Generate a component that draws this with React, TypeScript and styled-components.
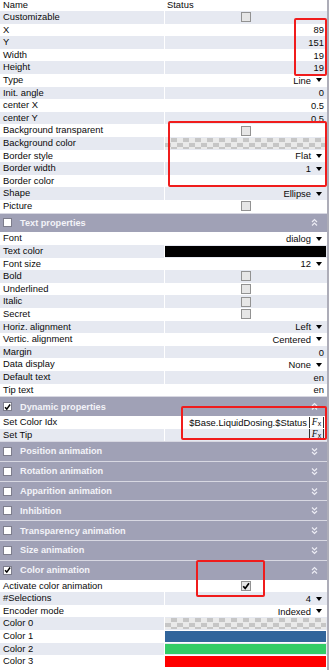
import React from "react";
import styled, { createGlobalStyle } from "styled-components";

type Value =
  | { kind: "text"; text: string; left?: boolean }
  | { kind: "check"; checked?: boolean }
  | { kind: "select"; text: string }
  | { kind: "checker" }
  | { kind: "color"; color: string }
  | { kind: "formula"; text?: string }
  | { kind: "empty" };

interface Row {
  label: string;
  value: Value;
}

interface Section {
  title?: string;
  checked?: boolean;
  open?: boolean;
  rows: Row[];
}

const txt = (text: string): Value => ({ kind: "text", text });
const sel = (text: string): Value => ({ kind: "select", text });
const chk = (checked = false): Value => ({ kind: "check", checked });

const sections: Section[] = [
  {
    rows: [
      { label: "Name", value: { kind: "text", text: "Status", left: true } },
      { label: "Customizable", value: chk() },
      { label: "X", value: txt("89") },
      { label: "Y", value: txt("151") },
      { label: "Width", value: txt("19") },
      { label: "Height", value: txt("19") },
      { label: "Type", value: sel("Line") },
      { label: "Init. angle", value: txt("0") },
      { label: "center X", value: txt("0.5") },
      { label: "center Y", value: txt("0.5") },
      { label: "Background transparent", value: chk() },
      { label: "Background color", value: { kind: "checker" } },
      { label: "Border style", value: sel("Flat") },
      { label: "Border width", value: sel("1") },
      { label: "Border color", value: { kind: "empty" } },
      { label: "Shape", value: sel("Ellipse") },
      { label: "Picture", value: chk() }
    ]
  },
  {
    title: "Text properties",
    open: true,
    rows: [
      { label: "Font", value: sel("dialog") },
      { label: "Text color", value: { kind: "color", color: "#000000" } },
      { label: "Font size", value: sel("12") },
      { label: "Bold", value: chk() },
      { label: "Underlined", value: chk() },
      { label: "Italic", value: chk() },
      { label: "Secret", value: chk() },
      { label: "Horiz. alignment", value: sel("Left") },
      { label: "Vertic. alignment", value: sel("Centered") },
      { label: "Margin", value: txt("0") },
      { label: "Data display", value: sel("None") },
      { label: "Default text", value: txt("en") },
      { label: "Tip text", value: txt("en") }
    ]
  },
  {
    title: "Dynamic properties",
    checked: true,
    open: true,
    rows: [
      {
        label: "Set Color Idx",
        value: { kind: "formula", text: "$Base.LiquidDosing.$Status" }
      },
      { label: "Set Tip", value: { kind: "formula" } }
    ]
  },
  { title: "Position animation", rows: [] },
  { title: "Rotation animation", rows: [] },
  { title: "Apparition animation", rows: [] },
  { title: "Inhibition", rows: [] },
  { title: "Transparency animation", rows: [] },
  { title: "Size animation", rows: [] },
  {
    title: "Color animation",
    checked: true,
    open: true,
    rows: [
      { label: "Activate color animation", value: chk(true) },
      { label: "#Selections", value: sel("4") },
      { label: "Encoder mode", value: sel("Indexed") },
      { label: "Color 0", value: { kind: "checker" } },
      { label: "Color 1", value: { kind: "color", color: "#31659b" } },
      { label: "Color 2", value: { kind: "color", color: "#33cc66" } },
      { label: "Color 3", value: { kind: "color", color: "#ff0000" } }
    ]
  }
];

// red markup boxes drawn over the grid in the screenshot
const marks = [
  { left: 294, top: 18, width: 33, height: 58 },
  { left: 168, top: 121, width: 159, height: 66 },
  { left: 181, top: 406, width: 146, height: 34 },
  { left: 196, top: 560, width: 69, height: 37 }
];

export default function App() {
  return (
    <>
      <GlobalStyle />
      <Page>
        <Grid>
          {sections.map((section, si) => (
            <React.Fragment key={si}>
              {section.title && (
                <Header>
                  <HeaderBox>{section.checked && <CheckMark />}</HeaderBox>
                  <HeaderTitle>{section.title}</HeaderTitle>
                  <Chevron up={!!section.open} />
                </Header>
              )}
              {section.rows.map((row, ri) => (
                <PropRow key={ri} $alt={ri % 2 === 1}>
                  <Label>{row.label}</Label>
                  <ValueCell value={row.value} />
                </PropRow>
              ))}
            </React.Fragment>
          ))}
        </Grid>
        {marks.map((m, i) => (
          <Mark key={i} style={m} />
        ))}
      </Page>
    </>
  );
}

function ValueCell({ value }: { value: Value }) {
  switch (value.kind) {
    case "text":
      return (
        <Cell $align={value.left ? "flex-start" : "flex-end"} $pad={value.left ? 2 : 3}>
          {value.text}
        </Cell>
      );
    case "check":
      return (
        <Cell $align="center">
          <Box>{value.checked && <CheckMark />}</Box>
        </Cell>
      );
    case "select":
      return (
        <Cell $align="flex-end" $pad={5}>
          {value.text}
          <Arrow />
        </Cell>
      );
    case "checker":
      return (
        <Cell $align="stretch" $pad={1}>
          <Checker />
        </Cell>
      );
    case "color":
      return (
        <Cell $align="stretch" $pad={1}>
          <Swatch $color={value.color} />
        </Cell>
      );
    case "formula":
      return (
        <Cell $align="flex-end" $pad={3}>
          {value.text && <FormulaText>{value.text}</FormulaText>}
          <FormulaIcon>
            F<small>x</small>
          </FormulaIcon>
        </Cell>
      );
    default:
      return <Cell $align="flex-end" />;
  }
}

function CheckMark() {
  return (
    <svg width="8" height="8" viewBox="0 0 8 8">
      <path d="M1.2 4.2 L3.2 6.4 L7 1.2" fill="none" stroke="#000" strokeWidth="1.7" />
    </svg>
  );
}

function Chevron({ up }: { up: boolean }) {
  const pts = up
    ? ["1,4 3.5,1.5 6,4", "1,7.5 3.5,5 6,7.5"]
    : ["1,1.5 3.5,4 6,1.5", "1,5 3.5,7.5 6,5"];
  return (
    <ChevronSvg width="7" height="9" viewBox="0 0 7 9">
      {pts.map((p) => (
        <polyline key={p} points={p} fill="none" stroke="#ececf4" strokeWidth="1.2" />
      ))}
    </ChevronSvg>
  );
}

const GlobalStyle = createGlobalStyle`
  html, body {
    margin: 0;
    padding: 0;
    background: #ffffff;
  }
  body {
    font-family: "Liberation Sans", Arial, sans-serif;
    font-size: 9.4px;
    color: #0a0a0a;
  }
`;

const Page = styled.div`
  position: relative;
  width: 329px;
  height: 670px;
  overflow: hidden;
  background: #ffffff;
`;

const Grid = styled.div`
  width: 327px;
  height: 672px;
  margin-top: -1.5px;
  border-right: 2px solid #adadb8;
  display: flex;
  flex-direction: column;
`;

const PropRow = styled.div<{ $alt: boolean }>`
  display: grid;
  grid-template-columns: 164px 1fr;
  column-gap: 1px;
  height: 12.6px;
  flex: none;
  background: #ffffff;

  & > * {
    background: ${(p) => (p.$alt ? "#e6e9f1" : "#ffffff")};
  }
`;

const Label = styled.div`
  padding-left: 3px;
  line-height: 12.6px;
  white-space: nowrap;
  overflow: hidden;
`;

const Cell = styled.div<{ $align: string; $pad?: number }>`
  display: flex;
  align-items: ${(p) => (p.$align === "stretch" ? "stretch" : "center")};
  justify-content: ${(p) => (p.$align === "stretch" ? "stretch" : p.$align)};
  padding: ${(p) => (p.$align === "stretch" ? "1px" : "0")} ${(p) => p.$pad ?? 0}px
    ${(p) => (p.$align === "stretch" ? "1px" : "0")}
    ${(p) => (p.$align === "flex-start" ? 2 : 0)}px;
  white-space: nowrap;
  overflow: hidden;
`;

const Box = styled.span`
  width: 10px;
  height: 10px;
  box-sizing: border-box;
  border: 1px solid #929292;
  background: #e6e6e6;
  display: flex;
  align-items: center;
  justify-content: center;
`;

const Arrow = styled.span`
  width: 0;
  height: 0;
  margin-left: 5px;
  border-left: 3.5px solid transparent;
  border-right: 3.5px solid transparent;
  border-top: 4px solid #000000;
`;

const Checker = styled.div`
  flex: 1;
  background-color: #eaeaea;
  background-image: repeating-conic-gradient(#c6c6c6 0% 25%, transparent 0% 50%);
  background-size: 12px 9px;
`;

const Swatch = styled.div<{ $color: string }>`
  flex: 1;
  background: ${(p) => p.$color};
`;

const FormulaText = styled.span`
  margin-right: 2px;
`;

const FormulaIcon = styled.span`
  display: inline-flex;
  align-items: flex-end;
  justify-content: center;
  box-sizing: border-box;
  width: 15px;
  height: 11px;
  border-left: 1px solid #333333;
  border-right: 1px solid #333333;
  font-family: "Liberation Serif", serif;
  font-style: italic;
  font-size: 9.5px;
  line-height: 11px;

  small {
    font-size: 7px;
    line-height: 8px;
    font-style: normal;
    font-family: "Liberation Sans", sans-serif;
  }
`;

const Header = styled.div`
  flex: none;
  height: 18.8px;
  border-top: 1px solid #d8d8e2;
  background: #a0a1b6;
  display: flex;
  align-items: center;
  padding: 0 9px 0 3px;
`;

const HeaderBox = styled.span`
  width: 9px;
  height: 9px;
  box-sizing: border-box;
  border: 1px solid #7d7d8c;
  background: #ffffff;
  display: flex;
  align-items: center;
  justify-content: center;
`;

const HeaderTitle = styled.span`
  flex: 1;
  margin-left: 8px;
  font-weight: bold;
  font-size: 9.2px;
  color: #f3f3f8;
`;

const ChevronSvg = styled.svg`
  flex: none;
`;

const Mark = styled.div`
  position: absolute;
  box-sizing: border-box;
  border: 2px solid #f01c1c;
  border-radius: 2px;
  pointer-events: none;
`;
